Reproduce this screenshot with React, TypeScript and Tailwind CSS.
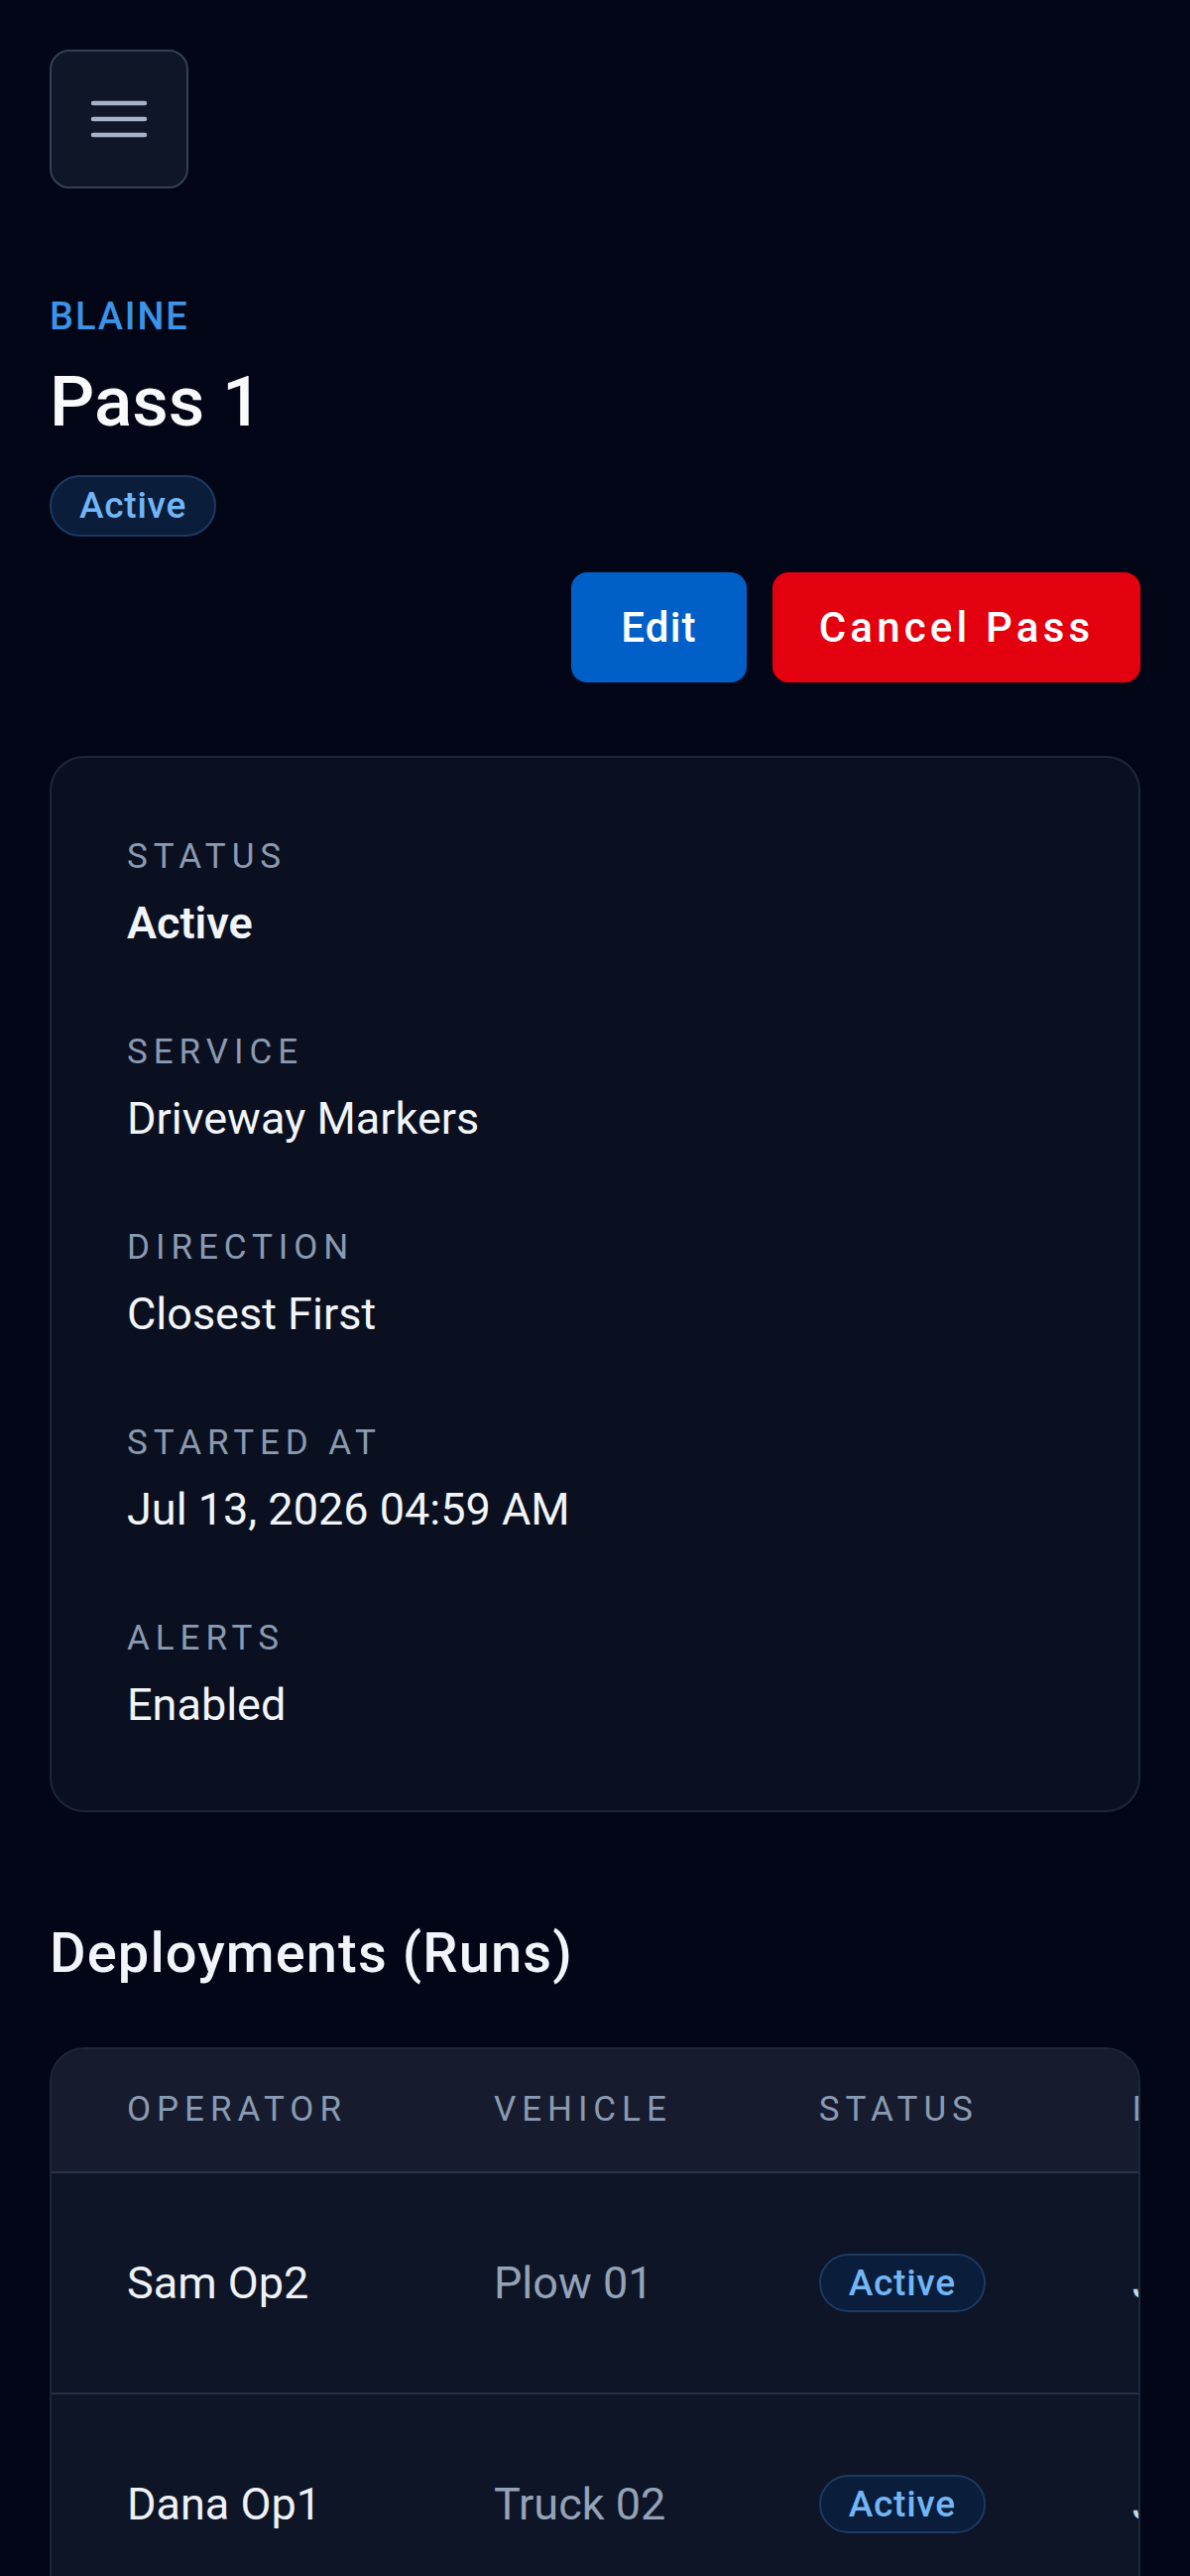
const details = [
  { label: "Status", value: "Active", strong: true },
  { label: "Service", value: "Driveway Markers" },
  { label: "Direction", value: "Closest First" },
  { label: "Started At", value: "Jul 13, 2026 04:59 AM" },
  { label: "Alerts", value: "Enabled" },
];

const runs = [
  { operator: "Sam Op2", vehicle: "Plow 01", status: "Active", deployed: "Jul 13, 2026 04:59 AM" },
  { operator: "Dana Op1", vehicle: "Truck 02", status: "Active", deployed: "Jul 13, 2026 04:59 AM" },
];

function StatusBadge({ children, size = "lg" }: { children: React.ReactNode; size?: "lg" | "sm" }) {
  return (
    <span
      className={
        "inline-flex items-center rounded-full border-2 border-[#1b3a64] bg-[#0a1d3b] px-[28px] text-[37px] font-medium tracking-[0.02em] text-[#72b6f7] " +
        (size === "lg" ? "h-[62px]" : "h-[59px]")
      }
    >
      {children}
    </span>
  );
}

export default function App() {
  return (
    <div
      className="min-h-[2597px] bg-[#020617] px-[50px] pt-[50px] text-[#f1f5f9]"
      style={{ fontFamily: "Roboto, 'Noto Sans', sans-serif" }}
    >
      {/* top bar */}
      <button className="flex h-[140px] w-[140px] items-center justify-center rounded-[20px] border-2 border-[#344054] bg-[#0e1628]">
        <svg width="58" height="40" viewBox="0 0 58 40" fill="none">
          <path d="M3 4h52M3 20h52M3 36h52" stroke="#a6b3c7" strokeWidth="4.5" strokeLinecap="round" />
        </svg>
      </button>

      {/* header */}
      <div className="mt-[103px] text-[38px] font-medium uppercase leading-[52px] tracking-[0.05em] text-[#3b94e8]">
        Blaine
      </div>
      <h1 className="mt-[14px] text-[71px] font-medium leading-[92px] text-[#f8fafc]">Pass 1</h1>
      <div className="mt-[28px]">
        <StatusBadge>Active</StatusBadge>
      </div>

      <div className="mt-[36px] flex justify-end gap-[26px]">
        <button className="h-[111px] w-[177px] rounded-[16px] bg-[#0060c7] text-[42px] font-medium tracking-[0.03em] text-white">
          Edit
        </button>
        <button className="h-[111px] w-[371px] rounded-[16px] bg-[#e3000f] text-[42px] font-medium tracking-[0.1em] text-white">
          Cancel Pass
        </button>
      </div>

      {/* details card */}
      <div className="mt-[74px] flex flex-col gap-[73px] rounded-[35px] border-2 border-[#1e2738] bg-[#0a1020] px-[76px] pb-[73px] pt-[76px]">
        {details.map((d) => (
          <div key={d.label}>
            <div className="text-[35px] font-normal uppercase leading-[48px] tracking-[0.17em] text-[#8a9ab2]">
              {d.label}
            </div>
            <div
              className={
                "mt-[10px] text-[45px] leading-[66px] text-[#f1f5f9] " + (d.strong ? "font-semibold" : "font-normal")
              }
            >
              {d.value}
            </div>
          </div>
        ))}
      </div>

      {/* deployments */}
      <h2 className="mt-[106px] text-[56px] font-medium leading-[72px] tracking-[0.02em] text-[#f1f5f9]">
        Deployments (Runs)
      </h2>
      <div className="mt-[59px] overflow-hidden rounded-[35px] border-2 border-[#1e2738] bg-[#0e1526]">
        <table className="border-collapse whitespace-nowrap text-left">
          <thead className="bg-[#161c2e]">
            <tr className="border-b-2 border-[#2a3446]">
              {["Operator", "Vehicle", "Status", "Deployed At", ""].map((h) => (
                <th
                  key={h}
                  className="h-[124px] pl-[76px] pr-[72px] align-middle text-[35px] font-normal uppercase tracking-[0.17em] text-[#8a9ab2]"
                >
                  {h}
                </th>
              ))}
            </tr>
          </thead>
          <tbody>
            {runs.map((r) => (
              <tr key={r.operator} className="border-b-2 border-[#263043]">
                <td className="h-[223px] pl-[76px] pr-[72px] align-middle text-[45px] text-[#eef2f7]">{r.operator}</td>
                <td className="pl-[76px] pr-[72px] align-middle text-[45px] text-[#94a3b8]">{r.vehicle}</td>
                <td className="pl-[76px] pr-[72px] align-middle">
                  <StatusBadge size="sm">{r.status}</StatusBadge>
                </td>
                <td className="pl-[76px] pr-[72px] align-middle text-[45px] text-[#cbd5e1]">{r.deployed}</td>
                <td className="pl-[76px] pr-[72px] align-middle text-[45px] text-[#94a3b8]">—</td>
              </tr>
            ))}
          </tbody>
        </table>
      </div>
    </div>
  );
}
